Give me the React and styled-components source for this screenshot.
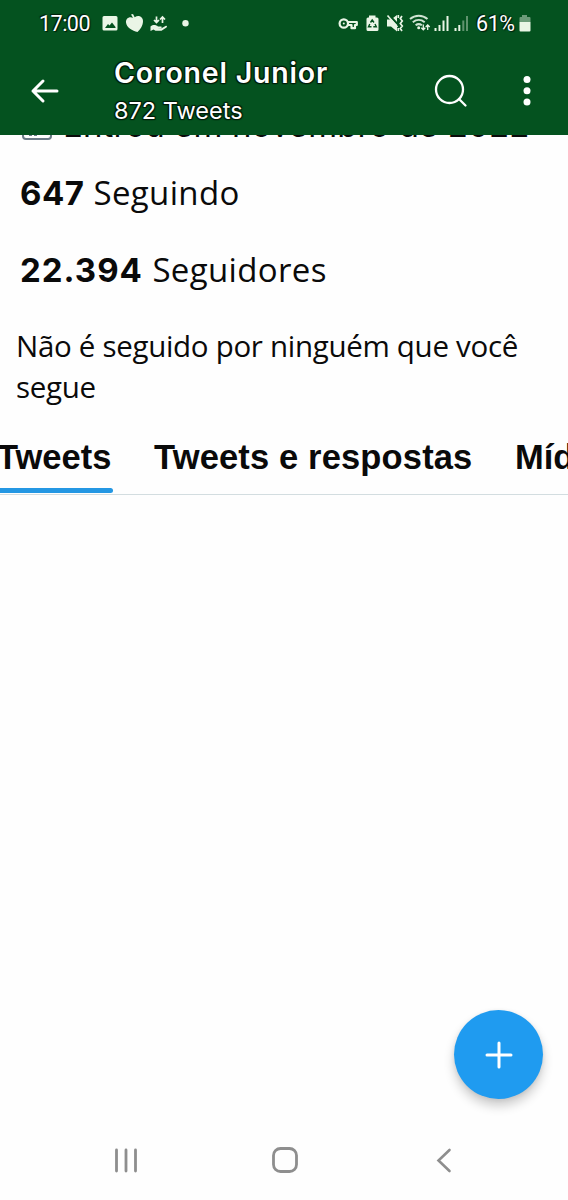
import React from 'react';
import styled, { createGlobalStyle } from 'styled-components';

const GlobalStyle = createGlobalStyle`
  * {
    box-sizing: border-box;
  }

  body {
    margin: 0;
    background: #fefefe;
  }
`;

const Screen = styled.div`
  position: relative;
  display: flex;
  flex-direction: column;
  width: 568px;
  height: 1200px;
  overflow: hidden;
  color: #0a0a0a;
  font-family: 'Open Sans', sans-serif;
  white-space: nowrap;
`;

const Header = styled.header`
  flex: none;
  height: 135px;
  background: #04521f;
  color: #fff;
`;

const StatusBar = styled.div`
  display: flex;
  align-items: center;
  height: 47px;
  padding: 0 36px 0 39px;
`;

const StatusText = styled.span`
  width: ${props => props.$width}px;
  margin-left: ${props => props.$left || 0}px;
  font: 400 21.5px/26px Roboto, sans-serif;
  letter-spacing: ${props => props.$spacing}px;
  text-shadow: 1px 1px 1px #001a08, -1px -1px 1px #001a08;
`;

const StatusIcons = styled.svg`
  flex: none;
  margin-left: ${props => props.$left || 0}px;
`;

const AppBar = styled.div`
  display: flex;
  height: 88px;
  padding: 9px 36px 0 29px;
`;

const BarIcon = styled.svg`
  flex: none;
  margin-top: ${props => props.$top}px;
  margin-left: ${props => props.$left || 0}px;
`;

const Titles = styled.div`
  width: 320px;
  margin-left: 54px;
  font-family: Inter, sans-serif;
  text-shadow: 1px 1px 1px #001a08, -1px -1px 1px #001a08, 1px -1px 1px #001a08, -1px 1px 1px #001a08;
`;

const Title = styled.div`
  font-size: 28.5px;
  font-weight: 600;
  line-height: 34px;
  letter-spacing: 0.8px;
`;

const Subtitle = styled.div`
  margin-top: 5px;
  font-size: 23.5px;
  line-height: 32px;
`;

const Profile = styled.main`
  flex: none;
  height: 360px;
  overflow: hidden;
  border-bottom: 1px solid #d3dde0;
`;

const Joined = styled.div`
  display: flex;
  height: 48px;
  margin-top: -34px;
  padding-left: 22px;
  font: 400 33px/48px Inter, sans-serif;
`;

const JoinedText = styled.span`
  margin-left: 11px;
  letter-spacing: 0.1px;
`;

const Count = styled.div`
  height: 77px;
  padding: 19px 0 0 20px;
  font-size: 33px;
  line-height: 50px;
  letter-spacing: ${props => props.$spacing}px;

  b {
    margin-right: ${props => props.$gap}px;
    font-family: Inter, sans-serif;
    font-weight: 700;
    letter-spacing: ${props => props.$boldSpacing}px;
  }
`;

const FollowNote = styled.p`
  margin: 22px 0 0 16px;
  font-size: 29.5px;
  line-height: 41px;
  letter-spacing: -0.3px;
`;

const Tabs = styled.nav`
  display: flex;
  height: 86px;
  margin-top: 19px;
`;

const Tab = styled.div`
  flex: none;
  width: ${props => props.$width}px;
  height: 67px;
  padding-top: 5px;
  margin-left: ${props => props.$left}px;
  font: 700 34.5px/52px 'Liberation Sans', Arial, sans-serif;
  letter-spacing: ${props => props.$spacing}px;

  &::after {
    content: '';
    display: block;
    height: 5px;
    margin-top: 5px;
    border-radius: 3px;
    background: ${props => (props.$active ? '#2497e3' : 'transparent')};
  }
`;

const ComposeButton = styled.button`
  position: absolute;
  left: 454px;
  top: 1010px;
  display: flex;
  align-items: center;
  justify-content: center;
  width: 89px;
  height: 89px;
  padding: 0;
  border: 0;
  border-radius: 50%;
  background: #1f9bf0;
  box-shadow: 0 7px 11px rgba(0, 0, 0, 0.2), 0 1px 4px rgba(0, 0, 0, 0.08);
`;

const NavBar = styled.footer`
  display: flex;
  justify-content: space-between;
  align-items: center;
  height: 80px;
  margin-top: auto;
  padding: 0 116px 0 114px;
`;

const LeftIcons = () => (
  <StatusIcons $left={7} width="92" height="26" viewBox="98 11 92 26" fill="#eaf5e6">
    <path fillRule="evenodd" d="M104 16h12a1.500 1.500 0 0 1 1.500 1.500v11.500a1.500 1.500 0 0 1-1.500 1.500h-12a1.500 1.500 0 0 1-1.500-1.500v-11.500a1.500 1.500 0 0 1 1.500-1.500zm1 12h10.500v-1l-3.500-4.500-2.500 3-1.500-1.500z" />
    <path d="M131 14.500l2-.5 1.700 3.300c4-3 8.300-.3 8.300 3.700 0 5-3 8.500-5.500 11-5-1-11-4.500-11.500-9.500-.4-4 3.300-6.500 7-4.700z" />
    <path d="M150.500 26.500c3-2.300 5.500-1.500 7.500 0h3c1 0 1 1.500 0 1.500h-3.500l4 .2 4-2.200c1.500-.5 2 .5 1 1.500l-5 3.300h-6l-2-1.300-3 1.500z" />
    <path d="M156.500 16.500v6M154 20l2.500 2.500L159 20M162.500 23v-6M160 19.500l2.500-2.500 2.500 2.500" fill="none" stroke="#eaf5e6" strokeWidth="1.700" />
    <circle cx="185.500" cy="23.300" r="3.200" />
  </StatusIcons>
);

const RightIcons = () => (
  <StatusIcons $left={148} width="132" height="26" viewBox="338 11 132 26" fill="#eaf5e6">
    <g fill="none" stroke="#eaf5e6" strokeWidth="2.200">
      <circle cx="343.800" cy="23.500" r="4.200" />
      <path d="M347.500 22h9.300v3h-1.800v3.200h-3.500v-3.200h-4" strokeLinejoin="round" />
    </g>
    <circle cx="343.800" cy="23.500" r="1" />
    <path d="M369 15.500h6.500v2h1.500q1.500 0 1.500 1.500v10.500q0 1.500-1.500 1.500h-9q-1.500 0-1.500-1.500v-10.500q0-1.500 1.500-1.500h1z" />
    <path d="M370.500 22.500l1.700-2.500 1.800 2.500M375 24l1.300 2.700h-3M371.500 26.700h-3l1.300-2.700" fill="none" stroke="#04521f" strokeWidth="1.400" />
    <path d="M387 19.500h4l6-4.500v16.500l-6-5h-4z" />
    <path d="M388.500 14.500l10 10.500" stroke="#04521f" strokeWidth="2" />
    <path d="M387.500 15.500l10 11.500" stroke="#eaf5e6" strokeWidth="1.600" />
    <path d="M398.300 15v3M398.300 28v3M402 16l-1.700 2.500 2 2.500-2 2.500 2 2.500-2 2.500 1.700 2.500" fill="none" stroke="#eaf5e6" strokeWidth="1.700" />
    <g fill="none" stroke="#cfe4d2" strokeWidth="2">
      <path d="M410 19c5-4.500 12.500-4.500 17.500 0" />
      <path d="M412.800 22.300c3.600-3 8.300-3 11.900 0" />
      <path d="M415.600 25.300c2-1.500 4.300-1.500 6.300 0" />
    </g>
    <circle cx="418.700" cy="27.800" r="1.500" />
    <path d="M423.300 24.500v5M421.300 27.800l2 2 2-2M427.700 30v-5M425.700 27l2-2 2 2" fill="none" stroke="#eaf5e6" strokeWidth="1.300" />
    <path d="M434.500 28h2v3h-2zM438.500 25h2v6h-2zM442.500 20.500h2v10.500h-2zM446.500 16h2v15h-2z" />
    <path d="M454.500 28h2v3h-2zM458.300 25h2v6h-2z" />
    <path d="M462.300 20.500h2v10.500h-2zM466 16h2v15h-2z" opacity=".4" />
  </StatusIcons>
);

const App = () => {
  return <>
    <GlobalStyle />
    <Screen>
      <Header>
        <StatusBar>
          <StatusText $width={52} $spacing={-0.5}>17:00</StatusText>
          <LeftIcons />
          <RightIcons />
          <StatusText $width={38} $left={6} $spacing={-0.4}>61%</StatusText>
          <StatusIcons $left={4} width="14" height="18" viewBox="0 0 14 18" fill="#eaf5e6">
            <path d="M4 0h5v2h2.500q1 0 1 1v4h-11v-4q0-1 1-1h1.500z" opacity=".45" />
            <path d="M1.500 7h11v8.500q0 1-1 1h-9q-1 0-1-1z" />
          </StatusIcons>
        </StatusBar>
        <AppBar>
          <BarIcon $top={22} width="31" height="26" viewBox="0 0 31 26" fill="none" stroke="#fff" strokeWidth="3" strokeLinecap="round" strokeLinejoin="round">
            <path d="M28 13H4M14 3L4 13l10 10" />
          </BarIcon>
          <Titles>
            <Title>Coronel Junior</Title>
            <Subtitle>872 Tweets</Subtitle>
          </Titles>
          <BarIcon $top={18} width="34" height="34" viewBox="0 0 34 34" fill="none" stroke="#fff" strokeWidth="2.300" strokeLinecap="round">
            <circle cx="15.500" cy="15.500" r="13.500" />
            <path d="M25 25l6.500 6.500" />
          </BarIcon>
          <BarIcon $top={19} $left={55} width="8" height="32" viewBox="0 0 8 32" fill="#fff">
            <circle cx="4" cy="4.500" r="3.500" />
            <circle cx="4" cy="15.700" r="3.500" />
            <circle cx="4" cy="27" r="3.500" />
          </BarIcon>
        </AppBar>
      </Header>
      <Profile>
        <Joined>
          <svg width="30" height="42" viewBox="0 0 30 42" fill="none" stroke="#6b7b87" strokeWidth="2">
            <rect x="1" y="10" width="28" height="28" rx="3" />
            <path d="M7 34h3M12 34h3" />
          </svg>
          <JoinedText>Entrou em novembro de 2022</JoinedText>
        </Joined>
        <Count $spacing={0.35} $gap={9} $boldSpacing={0.5}><b>647</b>Seguindo</Count>
        <Count $spacing={0.35} $gap={9.5} $boldSpacing={1}><b>22.394</b>Seguidores</Count>
        <FollowNote>
          Não é seguido por ninguém que você<br />segue
        </FollowNote>
        <Tabs>
          <Tab $active $width={116} $left={-3} $spacing={0}>Tweets</Tab>
          <Tab $width={320} $left={41} $spacing={0.15}>Tweets e respostas</Tab>
          <Tab $width={100} $left={41} $spacing={0}>Mídia</Tab>
        </Tabs>
      </Profile>
      <ComposeButton aria-label="Tweet">
        <svg width="28" height="28" viewBox="0 0 28 28" stroke="#fff" strokeWidth="3" strokeLinecap="round">
          <path d="M14 2v24M2 14h24" />
        </svg>
      </ComposeButton>
      <NavBar>
        <svg width="24" height="25" viewBox="0 0 24 25" stroke="#8e8e8e" strokeWidth="2.800" strokeLinecap="round">
          <path d="M2.500 2v21M12 2v21M21.500 2v21" />
        </svg>
        <svg width="30" height="26" viewBox="0 0 30 26" fill="none" stroke="#8e8e8e" strokeWidth="2.800">
          <rect x="1.500" y="1.500" width="23" height="23" rx="7" />
        </svg>
        <svg width="16" height="25" viewBox="0 0 16 25" fill="none" stroke="#8e8e8e" strokeWidth="2.600" strokeLinecap="round">
          <path d="M13.500 2L2.500 12.500l11 10.500" />
        </svg>
      </NavBar>
    </Screen>
  </>;
};

export default App;
